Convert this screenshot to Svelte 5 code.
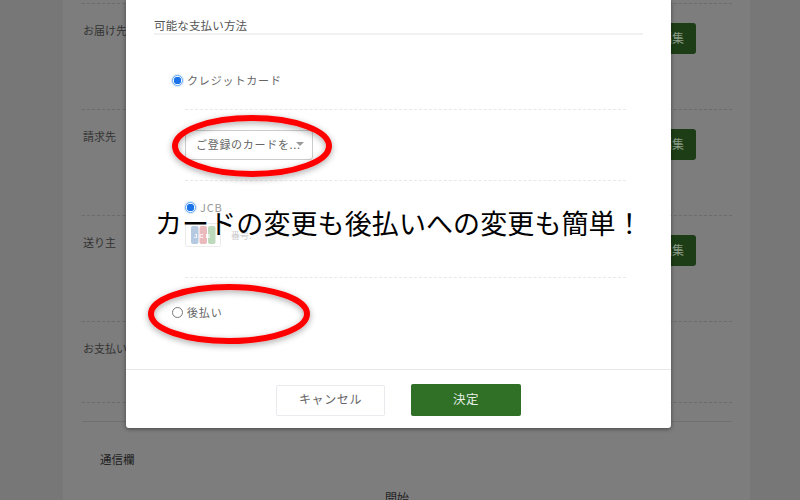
<script>
  const rows = [
    { label: 'お届け先', h: 106, edit: true },
    { label: '請求先', h: 106, edit: true },
    { label: '送り主', h: 106, edit: true },
    { label: 'お支払い', h: 81, edit: false }
  ];
</script>

<div class="screen">
  <div class="page">
    <div class="top-rule"></div>
    {#each rows as r}
      <div class="row" style="height:{r.h}px">
        <span class="label">{r.label}</span>
        {#if r.edit}<span class="edit">編集</span>{/if}
      </div>
    {/each}
    <div class="row thin"></div>
    <div class="memo">通信欄</div>
    <div class="after">開始</div>
  </div>

  <div class="modal">
    <div class="body">
      <div class="title">可能な支払い方法</div>
      <div class="option first">
        <span class="radio on"></span><span>クレジットカード</span>
      </div>
      <div class="nested">
        <div class="select-wrap">
          <div class="select"><span>ご登録のカードを...</span><i class="caret"></i></div>
        </div>
        <div class="jcb">
          <div class="option small"><span class="radio on"></span><span class="gray">JCB</span></div>
          <div class="card-line">
            <svg class="card" viewBox="0 0 36 24" width="36" height="24">
              <rect x=".5" y=".5" width="35" height="23" rx="1.5" fill="#fff" stroke="#e6e6e6" />
              <rect x="6" y="3" width="7.5" height="18" rx="2" fill="#9db9d8" />
              <rect x="14.5" y="3" width="7.5" height="18" rx="2" fill="#e3a3a8" />
              <rect x="23" y="3" width="7.5" height="18" rx="2" fill="#a8d0a6" />
              <text x="18" y="14.5" text-anchor="middle" class="cardtext">JCB</text>
            </svg>
            <span class="num">番号:</span><span class="numbar"></span>
          </div>
        </div>
      </div>
      <div class="option later"><span class="radio"></span><span>後払い</span></div>
    </div>
    <div class="footer">
      <div class="btn cancel">キャンセル</div>
      <div class="btn ok">決定</div>
    </div>
  </div>

  <svg class="marks" viewBox="0 0 800 500" width="800" height="500">
    <defs>
      <filter id="sh" x="-20%" y="-30%" width="140%" height="160%">
        <feDropShadow dx="0" dy="2" stdDeviation="3" flood-color="#000" flood-opacity=".35" />
      </filter>
    </defs>
    <ellipse cx="252" cy="146" rx="77" ry="28" fill="none" stroke="#f00" stroke-width="6" filter="url(#sh)" />
    <ellipse cx="229" cy="314" rx="78" ry="27" fill="none" stroke="#f00" stroke-width="6" filter="url(#sh)" />
  </svg>

  <div class="caption">カードの変更も後払いへの変更も簡単！</div>
</div>

<style>
  :global(body) { margin: 0; }
  .screen {
    position: relative;
    width: 800px;
    height: 500px;
    overflow: hidden;
    background: #777;
    font-family: "Noto Sans CJK JP", "Noto Sans", sans-serif;
  }
  .page {
    box-sizing: border-box;
    width: 687px;
    height: 500px;
    margin-left: 63px;
    padding: 3px 18px 0 19px;
    background: #7d7d7d;
    overflow: hidden;
  }
  .top-rule { border-bottom: 1px dashed #6b6b6b; }
  .row {
    box-sizing: border-box;
    display: flex;
    justify-content: space-between;
    align-items: flex-start;
    border-bottom: 1px dashed #6b6b6b;
    padding: 19px 36px 0 1px;
    color: #333;
    font-size: 11px;
    line-height: 14px;
  }
  .row.thin { height: 19px; padding: 0; border-bottom: 1px solid #707070; }
  .edit {
    width: 60px;
    height: 31px;
    box-sizing: border-box;
    padding-right: 12px;
    background: #1c3d15;
    border-radius: 3px;
    color: #8a9a86;
    font-size: 12px;
    line-height: 30px;
    text-align: right;
  }
  .memo {
    margin: 29px 0 0 18px;
    font-size: 11.5px;
    line-height: 16px;
    color: #222;
  }
  .after {
    margin: 23px 0 0 303px;
    font-size: 12px;
    line-height: 16px;
    color: #222;
  }
  .modal {
    position: absolute;
    left: 126px;
    top: 0;
    width: 545px;
    height: 428px;
    display: flex;
    flex-direction: column;
    background: #fff;
    border-radius: 0 0 3px 3px;
    box-shadow: 0 1px 4px rgba(0, 0, 0, .45);
  }
  .body {
    box-sizing: border-box;
    height: 369px;
    padding: 17px 28px 0 28px;
    color: #666;
    font-size: 11px;
  }
  .title {
    height: 16px;
    line-height: 16px;
    border-bottom: 2px solid #f1f1f1;
    color: #555;
    font-size: 11.5px;
    letter-spacing: .15px;
  }
  .option {
    display: flex;
    align-items: center;
    gap: 4px;
    height: 16px;
    letter-spacing: .85px;
  }
  .option.first { margin: 37px 0 0 18px; }
  .option.later { margin: 26px 0 0 18px; }
  .radio {
    box-sizing: border-box;
    flex: none;
    width: 11px;
    height: 11px;
    border: 1px solid #777;
    border-radius: 50%;
    background: #fff;
  }
  .radio.on {
    border-color: #5fa4f5;
    background: radial-gradient(circle, #1a73e8 0 3.5px, #fff 4px);
    box-shadow: 0 0 1px 1px #cfe3fb;
  }
  .nested {
    margin: 21px 17px 0 31px;
    border-bottom: 1px dashed #e8e8e8;
  }
  .select-wrap {
    border-top: 1px dashed #e8e8e8;
    border-bottom: 1px dashed #e8e8e8;
    padding: 20px 0;
  }
  .select {
    box-sizing: border-box;
    display: flex;
    align-items: center;
    justify-content: space-between;
    width: 128px;
    height: 30px;
    padding: 0 9px 2px 10px;
    border: 1px solid #ccc;
    border-radius: 3px;
    font-size: 11px;
    letter-spacing: .7px;
    white-space: nowrap;
  }
  .caret {
    flex: none;
    margin-left: -5px;
    border-left: 4px solid transparent;
    border-right: 4px solid transparent;
    border-top: 4px solid #999;
  }
  .jcb { height: 96px; padding-top: 18px; box-sizing: border-box; }
  .gray { color: #999; }
  .card-line { display: flex; align-items: center; margin-top: 8px; }
  .card { flex: none; opacity: .75; }
  .cardtext { font: bold 6px "Liberation Sans", sans-serif; fill: #fff; letter-spacing: 2px; }
  .num { margin-left: 10px; color: #ccc; font-size: 9px; }
  .numbar { width: 56px; height: 10px; margin-left: 4px; background: #fafafa; }
  .footer {
    box-sizing: border-box;
    flex: 1;
    display: flex;
    justify-content: center;
    align-items: flex-start;
    gap: 26px;
    padding: 14px 0 0 0;
    border-top: 1px solid #e8e8e8;
  }
  .btn {
    box-sizing: border-box;
    width: 110px;
    height: 32px;
    line-height: 29px;
    border-radius: 2px;
    font-size: 12px;
    text-align: center;
    letter-spacing: .6px;
  }
  .cancel { width: 109px; height: 31px; margin-top: 1px; line-height: 26px; border: 1px solid #e8eaee; color: #666; }
  .ok { background: #2f6f26; color: #e8efe6; font-size: 12.5px; }
  .marks { position: absolute; left: 0; top: 0; pointer-events: none; }
  .caption {
    position: absolute;
    left: 155px;
    top: 203px;
    font-size: 27px;
    line-height: 40px;
    letter-spacing: .1px;
    color: #000;
    white-space: nowrap;
    text-shadow: 0 0 2px #fff;
  }
</style>
